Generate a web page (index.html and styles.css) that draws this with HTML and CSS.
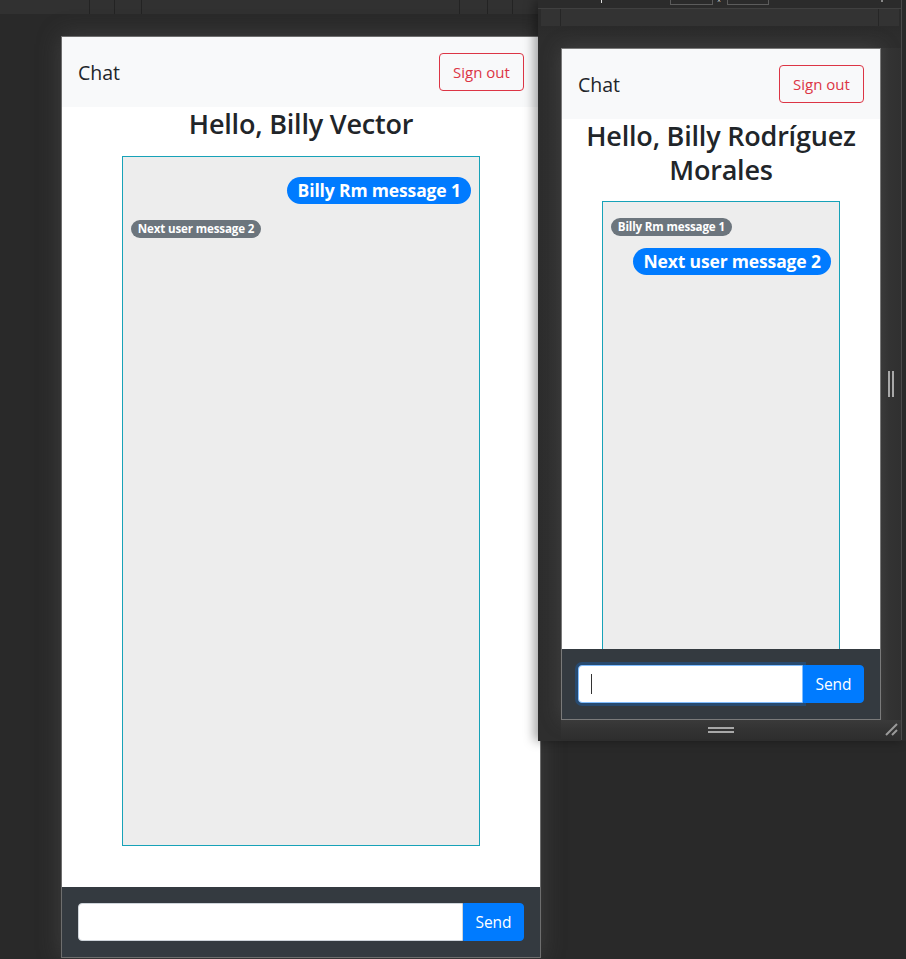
FILE: index.html
```html
<!DOCTYPE html>
<html lang="en">
<head>
<meta charset="utf-8">
<title>Chat</title>
<link rel="stylesheet" href="styles.css">
</head>
<body>
<div class="desktop">
  <div class="topbar">
    <span class="seg seg-a"></span><span class="seg seg-b"></span><span class="seg seg-c"></span><span class="seg seg-d"></span><span class="seg seg-e"></span><span class="seg seg-f"></span><span class="seg seg-g"></span>
  </div>

  <div class="win win-left">
    <div class="app app-left">
      <nav class="navbar">
        <span class="brand">Chat</span>
        <button class="btn-signout">Sign out</button>
      </nav>
      <main class="main">
        <h3 class="hello">Hello, Billy Vector</h3>
        <div class="chatbox chatbox-left">
          <div class="msg msg-mine"><span class="pill pill-primary">Billy Rm message 1</span></div>
          <div class="msg msg-other"><span class="pill pill-secondary">Next user message 2</span></div>
        </div>
      </main>
      <footer class="footer">
        <div class="input-group">
          <span class="input-wrap">
            <input class="text-input" type="text">
          </span>
          <button class="btn-send">Send</button>
        </div>
      </footer>
    </div>
  </div>

  <div class="devtools">
    <div class="dt-top">
      <span class="dt-tick"></span>
      <span class="dt-box dt-box1"></span>
      <span class="dt-x">×</span>
      <span class="dt-box dt-box2"></span>
      <span class="dt-dot"></span>
    </div>
    <div class="dt-bar">
      <span class="dt-bar-a"></span><span class="dt-bar-b"></span><span class="dt-bar-c"></span>
    </div>
    <div class="dt-stage">
      <div class="dt-row">
        <div class="viewport">
          <div class="app app-right">
            <nav class="navbar">
              <span class="brand">Chat</span>
              <button class="btn-signout">Sign out</button>
            </nav>
            <main class="main">
              <h3 class="hello">Hello, Billy Rodríguez Morales</h3>
              <div class="chatbox chatbox-right">
                <div class="msg msg-other"><span class="pill pill-secondary">Billy Rm message 1</span></div>
                <div class="msg msg-mine"><span class="pill pill-primary">Next user message 2</span></div>
              </div>
            </main>
            <footer class="footer">
              <div class="input-group">
                <span class="input-wrap">
                  <input class="text-input text-input-focus" type="text">
                  <span class="caret"></span>
                </span>
                <button class="btn-send">Send</button>
              </div>
            </footer>
          </div>
        </div>
        <div class="side-handle"><span class="grip-v"></span><span class="grip-v"></span></div>
      </div>
      <div class="bottom-handle">
        <span class="grip-h"></span>
        <svg class="corner" width="14" height="14" viewBox="0 0 14 14"><path d="M2 13 L13 2 M8 13 L13 8" stroke="#9a9a9a" stroke-width="2" fill="none"/></svg>
      </div>
    </div>
  </div>
</div>
</body>
</html>
```

FILE: styles.css
```css
* { box-sizing: border-box; }
html, body { margin: 0; padding: 0; }
body {
  width: 906px;
  height: 959px;
  overflow: hidden;
  background: #292929;
  font-family: "Open Sans", "Noto Sans", sans-serif;
  color: #212529;
}
.desktop {
  position: relative;
  width: 906px;
  height: 959px;
  background: #292929;
}

/* top toolbar */
.topbar {
  display: flex;
  height: 14px;
  background: #313131;
}
.seg { height: 14px; border-right: 1px solid #232323; }
.seg-a { width: 90px; }
.seg-b { width: 25px; }
.seg-c { width: 27px; }
.seg-d { width: 318px; }
.seg-e { width: 28px; }
.seg-f { width: 25px; }
.seg-g { flex: 1; border-right: 0; }

/* windows */
.win-left {
  position: absolute;
  left: 61px;
  top: 36px;
  width: 480px;
  height: 922px;
  border: 1px solid #6e6e6e;
  background: #fff;
  box-shadow: 0 0 22px rgba(90, 90, 90, 0.45);
}
.app {
  display: flex;
  flex-direction: column;
  height: 100%;
  background: #fff;
  overflow: hidden;
}
.navbar {
  display: flex;
  align-items: center;
  justify-content: space-between;
  flex: none;
  height: 70px;
  padding: 16px;
  background: #f8f9fa;
}
.brand {
  font-size: 19.5px;
  line-height: 1.5;
  color: #212529;
  padding-top: 2px;
}
.btn-signout {
  font-family: inherit;
  height: 38px;
  width: 85px;
  padding: 0;
  font-size: 15px;
  color: #dc3545;
  background: transparent;
  border: 1px solid #dc3545;
  border-radius: 4px;
}
.main {
  flex: 1;
  min-height: 0;
  display: flex;
  flex-direction: column;
  align-items: center;
}
.hello {
  margin: 0 0 15px;
  font-size: 27px;
  font-weight: 550;
  line-height: 1.245;
  text-align: center;
  letter-spacing: -0.2px;
  color: #212529;
}
.chatbox {
  width: 75%;
  flex: none;
  background: #ededed;
  border: 1px solid #17a2b8;
  padding: 16px 8px;
  display: flex;
  flex-direction: column;
}
.chatbox-left { height: 690px; }
.chatbox-right { height: 502px; }
.msg { display: flex; }
.msg-mine { justify-content: flex-end; margin-top: 4px; margin-bottom: 16px; }
.msg-other { justify-content: flex-start; margin-bottom: 8px; }
.pill {
  display: inline-block;
  color: #fff;
  font-weight: 700;
  white-space: nowrap;
  border-radius: 10em;
}
.pill-primary {
  background: #007bff;
  font-size: 17.5px;
  line-height: 17px;
  padding: 5px 10.5px;
  letter-spacing: -0.15px;
}
.pill-secondary {
  background: #6c757d;
  font-size: 11.6px;
  line-height: 12px;
  padding: 3px 7px;
  letter-spacing: -0.15px;
}

.footer {
  position: relative;
  flex: none;
  height: 70px;
  padding: 16px;
  background: #343a40;
}
.input-group { display: flex; height: 38px; }
.input-wrap { position: relative; flex: 1; min-width: 0; display: flex; }
.text-input {
  width: 100%;
  min-width: 0;
  height: 38px;
  padding: 6px 12px;
  font-family: inherit;
  font-size: 16px;
  background: #fff;
  border: 1px solid #ced4da;
  border-radius: 4px 0 0 4px;
  outline: none;
}
.text-input-focus {
  border-color: #80bdff;
  box-shadow: 0 0 0 3px rgba(0, 123, 255, 0.25);
}
.caret {
  position: absolute;
  left: 13px;
  top: 9px;
  width: 1px;
  height: 20px;
  background: #333;
}
.btn-send {
  position: relative;
  flex: none;
  width: 61px;
  height: 38px;
  padding: 0;
  font-family: inherit;
  font-size: 15.5px;
  color: #fff;
  background: #007bff;
  border: 1px solid #007bff;
  border-radius: 0 4px 4px 0;
}

/* devtools popup window */
.devtools {
  position: absolute;
  left: 538px;
  top: 0;
  width: 368px;
  height: 741px;
  background: #2b2b2b;
  border-right: 5px solid #2a2a2a;
  box-shadow: -4px 0 10px rgba(0, 0, 0, 0.35);
  display: flex;
  flex-direction: column;
}
.devtools::after {
  content: "";
  position: absolute;
  right: -1px;
  top: 0;
  width: 1px;
  height: 740px;
  background: #4a4a4a;
}
.dt-top {
  position: relative;
  height: 9px;
  border-bottom: 1px solid #404040;
  flex: none;
}
.dt-box {
  position: absolute;
  top: -2px;
  height: 7px;
  border: 1px solid #5c5c5c;
}
.dt-box1 { left: 132px; width: 43px; }
.dt-box2 { left: 189px; width: 42px; }
.dt-x {
  position: absolute;
  left: 179px;
  top: -3px;
  font-size: 7px;
  color: #ddd;
  line-height: 1;
}
.dt-tick {
  position: absolute;
  left: 63px;
  top: 0;
  width: 1px;
  height: 3px;
  background: #ddd;
}
.dt-dot {
  position: absolute;
  left: 343px;
  top: 0;
  width: 2px;
  height: 2px;
  background: #888;
}
.dt-bar {
  flex: none;
  display: flex;
  height: 17px;
  margin: 0 2px 0 3px;
  background: #333;
}
.dt-bar-a { width: 20px; border-right: 1px solid #262626; }
.dt-bar-b { width: 318px; border-right: 1px solid #262626; }
.dt-bar-c { flex: 1; }
.dt-stage {
  flex: 1;
  display: flex;
  flex-direction: column;
  padding: 22px 0 0 23px;
  background: linear-gradient(#2b2b2b, #2d2d2d 12px, #2e2e2e);
}
.dt-row { display: flex; }
.viewport {
  flex: none;
  width: 320px;
  height: 672px;
  border: 1px solid #7a7a7a;
  background: #fff;
  box-shadow: 0 0 18px rgba(110, 110, 110, 0.35);
}
.side-handle {
  flex: none;
  width: 20px;
  display: flex;
  justify-content: center;
  align-items: center;
  gap: 2px;
  background: linear-gradient(90deg, #3a3a3a, #333 40%, #303030);
}
.grip-v { width: 2px; height: 26px; background: #a8a8a8; }
.bottom-handle {
  position: relative;
  flex: none;
  height: 19px;
  width: 340px;
  display: flex;
  justify-content: center;
  align-items: center;
  background: linear-gradient(#3a3a3a, #333 50%, #2e2e2e);
}
.grip-h {
  width: 26px;
  height: 6px;
  border-top: 2px solid #a8a8a8;
  border-bottom: 2px solid #a8a8a8;
  margin-left: -20px;
}
.corner {
  position: absolute;
  right: 3px;
  top: 2px;
}
```
